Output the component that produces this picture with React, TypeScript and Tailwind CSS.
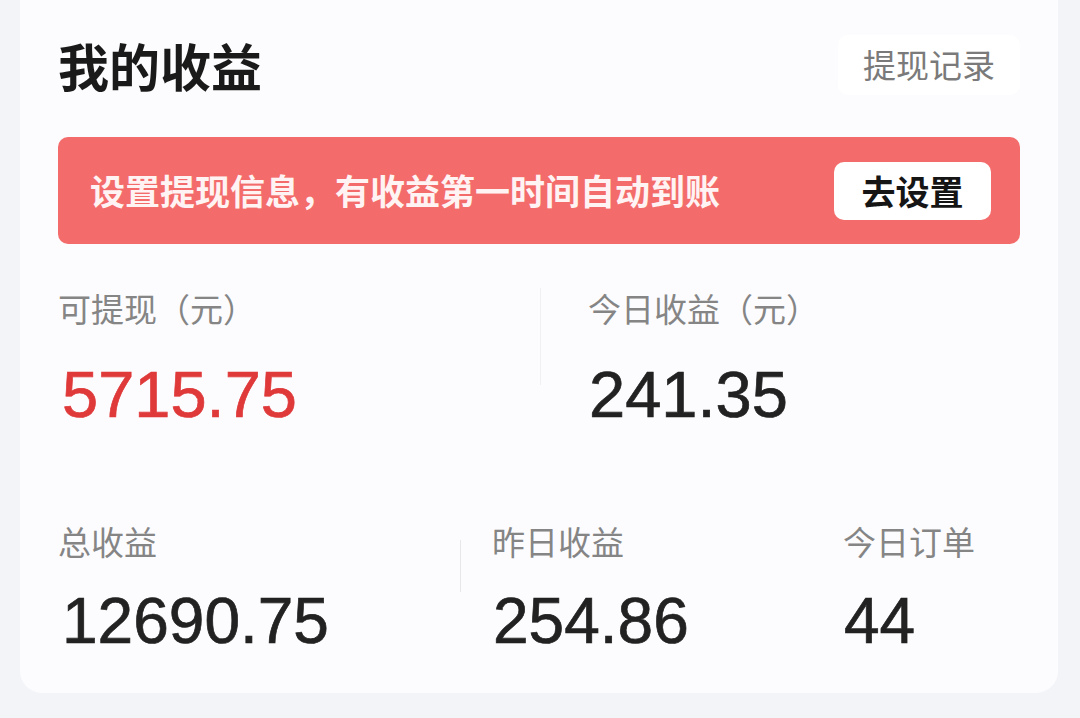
const cjk = "font-['Noto_Sans_CJK_SC','Noto_Sans',sans-serif]";
const num = "font-['Liberation_Sans',Arial,sans-serif] [-webkit-text-stroke:0.7px]";

function Stat({ label, value, red, size, inset }: { label: string; value: string; red?: boolean; size: 'lg' | 'md'; inset?: boolean }) {
  return (
    <div className="flex flex-col">
      <div className={`${cjk} text-[33px] leading-[40px] text-[#858585]`}>{label}</div>
      <div
        className={`${num} ${inset ? 'pl-[4px]' : 'pl-[1px]'} ${size === 'lg' ? 'mt-[34px] text-[65px] leading-[65px]' : 'mt-[28px] text-[64px] leading-[64px]'} ${
          red ? 'text-[#df393a]' : 'text-[#222222]'
        }`}
      >
        {value}
      </div>
    </div>
  );
}

export default function App() {
  return (
    <div className="w-[1080px] h-[718px] bg-[#f3f4f8] pl-[20px] pr-[22px] overflow-hidden">
      <div className="h-[693px] bg-[#fcfcfe] rounded-b-[22px] px-[38px] flex flex-col">
        {/* header */}
        <div className="pt-[35px] flex items-center justify-between">
          <h1 className={`${cjk} text-[51px] leading-[60px] font-bold text-[#1a1a1a]`}>我的收益</h1>
          <button className={`${cjk} w-[182px] h-[60px] bg-white rounded-[10px] text-[33px] text-[#7a7a7a] flex items-center justify-center`}>
            提现记录
          </button>
        </div>

        {/* banner */}
        <div className="mt-[42px] h-[107px] bg-[#f36c6b] rounded-[10px] flex items-center justify-between pl-[32px] pr-[29px]">
          <span className={`${cjk} text-[35px] font-semibold text-[#fff3f3]`}>设置提现信息，有收益第一时间自动到账</span>
          <button className={`${cjk} w-[157px] h-[58px] bg-white rounded-[10px] text-[34px] font-bold text-[#151515] flex items-center justify-center`}>
            去设置
          </button>
        </div>

        {/* top stats */}
        <div className="mt-[44px] flex">
          <div className="w-[482px]">
            <Stat label="可提现（元）" value="5715.75" red size="lg" inset />
          </div>
          <div className="w-px h-[97px] bg-[#f0f0f2]" />
          <div className="pl-[47px]">
            <Stat label="今日收益（元）" value="241.35" size="lg" />
          </div>
        </div>

        {/* bottom stats */}
        <div className="mt-[94px] flex">
          <div className="w-[402px]">
            <Stat label="总收益" value="12690.75" size="md" inset />
          </div>
          <div className="w-px h-[52px] mt-[19px] bg-[#e8e8ea]" />
          <div className="w-[382px] pl-[31px]">
            <Stat label="昨日收益" value="254.86" size="md" />
          </div>
          <div>
            <Stat label="今日订单" value="44" size="md" />
          </div>
        </div>
      </div>
    </div>
  );
}
